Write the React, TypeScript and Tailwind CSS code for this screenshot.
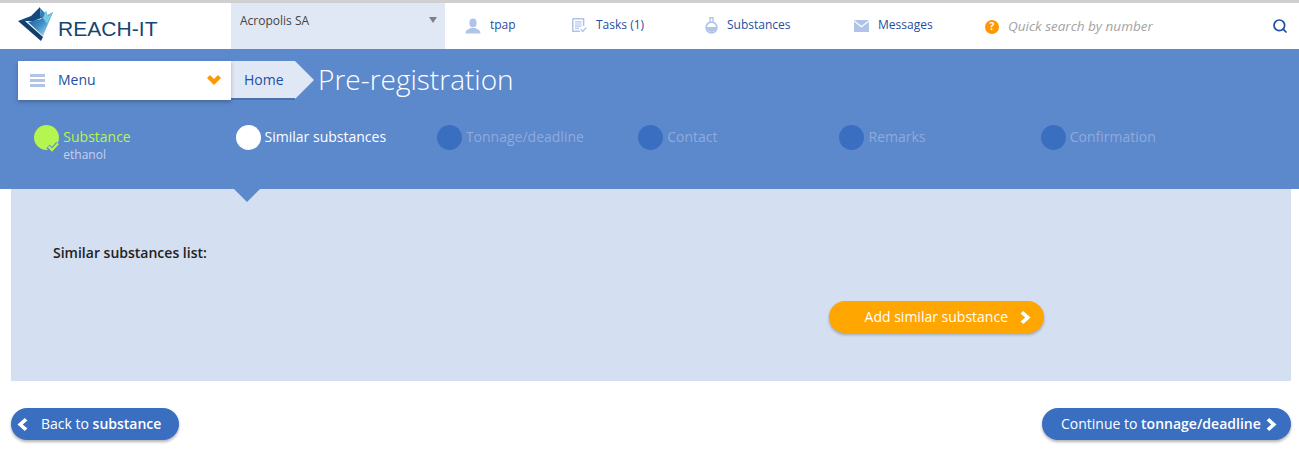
// App.tsx
// Pre-registration wizard page, step "Similar substances".
import { Search } from "lucide-react";

const STEPS = [
  { label: "Substance", sub: "ethanol", state: "done" },
  { label: "Similar substances", state: "current" },
  { label: "Tonnage/deadline", state: "todo" },
  { label: "Contact", state: "todo" },
  { label: "Remarks", state: "todo" },
  { label: "Confirmation", state: "todo" },
];

function Logo() {
  return (
    <div className="flex items-center">
      <svg width="36" height="35" viewBox="0 0 36 35" className="shrink-0">
        <defs>
          <linearGradient id="logoBody" x1="0.1" y1="0.1" x2="0.8" y2="0.8">
            <stop offset="0" stopColor="#16568f" />
            <stop offset="0.6" stopColor="#3f8fc8" />
            <stop offset="1" stopColor="#8cc8ea" />
          </linearGradient>
        </defs>
        <path d="M0 14 L13 9 L22 0 L23 11 L16 14 L8 14 Z" fill="#14497f" />
        <path d="M0 14 L23 34 L25 30 L7 14 Z" fill="#123d6e" />
        <path d="M10 15 L23 12 L35 5 L25 29 Z" fill="url(#logoBody)" />
        <path d="M22 1 L29 8 L23 12 Z" fill="#2f7fba" />
        <path d="M28 3 L30 9 L35 5 L29 17 L25 11 Z" fill="#74cbe4" />
      </svg>
      <span className="ml-[4px] mt-[7px] font-['Liberation_Sans',sans-serif] text-[21px] leading-none tracking-[0.05px] text-[#154573]">
        REACH-IT
      </span>
    </div>
  );
}

function UserIcon() {
  return (
    <svg width="16" height="16" viewBox="0 0 16 16" fill="#b0c4e8">
      <ellipse cx="8" cy="5" rx="3.6" ry="4.4" />
      <path d="M0.5 15.5 C0.5 11.5 4 11 6 10 L10 10 C12 11 15.5 11.5 15.5 15.5 Z" />
    </svg>
  );
}

function TasksIcon() {
  return (
    <svg width="15" height="15" viewBox="0 0 15 15" fill="none">
      <path d="M0.8 0.8 H11.6 V8 M8 13.2 H0.8 V0.8" stroke="#b0c4e8" strokeWidth="1.5" />
      <path d="M3 3.8 H9.5 M3 6 H9.5 M3 8.2 H9.5 M3 10.4 H7" stroke="#b0c4e8" strokeWidth="1.2" />
      <path d="M8.8 11.5 L10.8 13.5 L14.2 9.5" stroke="#b0c4e8" strokeWidth="1.3" />
    </svg>
  );
}

function FlaskIcon() {
  return (
    <svg width="13" height="17" viewBox="0 0 13 17" fill="none">
      <path d="M5 0.5 V6 M8 0.5 V6" stroke="#b0c4e8" strokeWidth="1.3" />
      <rect x="4.5" y="0" width="4" height="1.5" fill="#b0c4e8" />
      <circle cx="6.5" cy="10.5" r="5.4" stroke="#b0c4e8" strokeWidth="1.6" fill="#fff" />
      <path d="M1.5 10 H11.5 A5 5 0 0 1 1.5 10 Z" fill="#b0c4e8" />
    </svg>
  );
}

function MailIcon() {
  return (
    <svg width="15" height="12" viewBox="0 0 15 12">
      <path d="M0 0 H15 L7.5 6 Z" fill="#b0c4e8" />
      <path d="M0 1.6 L7.5 7.6 L15 1.6 V12 H0 Z" fill="#b0c4e8" />
    </svg>
  );
}

function ChevronRightBold({ className }: { className?: string }) {
  return (
    <svg width="11" height="13" viewBox="0 0 11 13" className={className} fill="currentColor">
      <path d="M3.2 0 L10.5 6.5 L3.2 13 L0.6 10.6 L5.2 6.5 L0.6 2.4 Z" />
    </svg>
  );
}

function ChevronLeftBold({ className }: { className?: string }) {
  return (
    <svg width="11" height="13" viewBox="0 0 11 13" className={className} fill="currentColor">
      <path d="M7.8 0 L0.5 6.5 L7.8 13 L10.4 10.6 L5.8 6.5 L10.4 2.4 Z" />
    </svg>
  );
}

function NavItem({
  icon,
  label,
  iconWidth,
  className,
}: {
  icon: React.ReactNode;
  label: string;
  iconWidth: string;
  className: string;
}) {
  return (
    <div className={`flex items-center ${className}`}>
      <div className={`flex shrink-0 justify-start ${iconWidth}`}>{icon}</div>
      <span className="pb-[2px] text-xs text-[#1f4ea3]">{label}</span>
    </div>
  );
}

function StepDot({ state }: { state: string }) {
  const color =
    state === "done" ? "bg-[#b5f54f]" : state === "current" ? "bg-white" : "bg-[#3a6ec0]";
  return (
    <div className={`relative size-[25px] shrink-0 rounded-full ${color}`}>
      {state === "done" && (
        <svg width="14" height="12" viewBox="0 0 14 12" className="absolute -bottom-[3px] -right-[1px]" fill="none">
          <path d="M2 5.5 L6 9.5 L12 2.5" stroke="#5c88cc" strokeWidth="4.6" />
          <path d="M2.5 5.5 L6 9 L12 2.5" stroke="#b5f54f" strokeWidth="2.4" />
        </svg>
      )}
    </div>
  );
}

export default function App() {
  return (
    <div className="h-[458px] overflow-hidden bg-white font-['Open_Sans',sans-serif]">
      <div className="h-[3px] bg-[#cfcfcf]" />

      {/* top bar */}
      <header className="flex h-[46px] items-stretch">
        <div className="flex w-[231px] shrink-0 items-center pb-[3px] pl-[18px]">
          <Logo />
        </div>
        <div className="flex w-[214px] shrink-0 items-start justify-between bg-[#e1e8f5] pl-[9px] pr-2 pt-[10px]">
          <span className="text-xs text-[#444]">Acropolis SA</span>
          <span className="mt-1 h-0 w-0 border-x-[4px] border-t-[6px] border-x-transparent border-t-[#808080]" />
        </div>
        <div className="flex items-center pb-[1px]">
          <NavItem icon={<UserIcon />} label="tpap" iconWidth="w-[25px]" className="ml-[20px] w-[107px]" />
          <NavItem icon={<TasksIcon />} label="Tasks (1)" iconWidth="w-[24px]" className="w-[133px]" />
          <NavItem icon={<FlaskIcon />} label="Substances" iconWidth="w-[22px]" className="w-[149px]" />
          <NavItem icon={<MailIcon />} label="Messages" iconWidth="w-[24px]" className="w-[131px]" />
          <div className="mt-[2px] flex size-[14px] shrink-0 items-center justify-center rounded-full bg-[#ff9800] text-[10px] font-bold text-white">
            ?
          </div>
          <span className="ml-[9px] mt-[2px] text-[13.5px] italic text-[#a3a3a3]">Quick search by number</span>
        </div>
        <div className="ml-auto flex items-center pb-[1px] pr-[11px]">
          <Search size={16} strokeWidth={2.6} className="text-[#1f4ea3]" />
        </div>
      </header>

      {/* blue band */}
      <section className="relative h-[140px] bg-[#5c88cc] pl-[18px] pt-[12px]">
        <div className="flex h-[39px] items-stretch">
          <div className="relative z-10 flex w-[213px] items-center bg-white pl-[12px] pr-[10px] shadow-[0_2px_4px_rgba(0,0,0,0.25)]">
            <div className="flex w-[15px] flex-col gap-[2px]">
              <div className="h-[3px] bg-[#b0c4e8]" />
              <div className="h-[3px] bg-[#b0c4e8]" />
              <div className="h-[3px] bg-[#b0c4e8]" />
            </div>
            <span className="ml-[13px] pb-[2px] text-sm text-[#1f4ea3]">Menu</span>
            <svg width="14" height="10" viewBox="0 0 14 10" className="ml-auto mb-[1px] text-[#ff9800]" fill="currentColor">
              <path d="M0 3 L3 0 L7 4 L11 0 L14 3 L7 10 Z" />
            </svg>
          </div>
          <div className="relative flex w-[64px] items-center border-b-2 border-[#4a70ad] bg-[#e1e8f5] pl-[13px]">
            <span className="pt-[1px] text-sm text-[#1f4ea3]">Home</span>
            <div className="absolute left-full top-0 h-0 w-0 border-y-[19px] border-l-[19px] border-y-transparent border-l-[#e1e8f5]" />
          </div>
          <h1 className="ml-[23px] pb-[2px] text-[28px] font-light leading-[37px] text-white">Pre-registration</h1>
        </div>

        <div className="mt-[25px] flex pl-[16.3px]">
          {STEPS.map((step) => (
            <div key={step.label} className="flex w-[201.3px] shrink-0 items-start gap-[4px]">
              <StepDot state={step.state} />
              <div className="flex flex-col">
                <span
                  className={`text-sm leading-[24px] ${
                    step.state === "done"
                      ? "text-[#b5f54f]"
                      : step.state === "current"
                        ? "text-white"
                        : "text-[#8fabdc]"
                  }`}
                >
                  {step.label}
                </span>
                {step.sub && <span className="text-xs leading-[12px] text-[#c3d3ee]">{step.sub}</span>}
              </div>
            </div>
          ))}
        </div>

        <div className="absolute left-[234px] top-full z-10 h-0 w-0 border-x-[13px] border-t-[13px] border-x-transparent border-t-[#5c88cc]" />
      </section>

      {/* content panel */}
      <main className="relative ml-[11px] mr-[8px] h-[192px] bg-[#d4dff1] pl-[42px] pt-[54px]">
        <div className="text-sm font-semibold leading-5 text-[#222]">Similar substances list:</div>
        <div className="ml-[776px] mt-[38px] flex h-[32px] w-[215px] items-center justify-end rounded-[16px] bg-[#ffa600] pr-[13px] text-white shadow-[0_2px_3px_rgba(0,0,0,0.25)]">
          <span className="text-sm">Add similar substance</span>
          <ChevronRightBold className="ml-[12px] mt-[1px]" />
        </div>
      </main>

      {/* wizard buttons */}
      <div className="ml-[11px] mr-[8px] mt-[27px] flex justify-between">
        <div className="flex h-[32px] w-[168px] items-center rounded-[16px] bg-[#396ec0] pl-[6px] text-sm text-white shadow-[0_2px_3px_rgba(0,0,0,0.3)]">
          <ChevronLeftBold className="mt-[1px]" />
          <span className="ml-[13px]">
            Back to <b className="font-semibold">substance</b>
          </span>
        </div>
        <div className="flex h-[32px] w-[249px] items-center rounded-[16px] bg-[#396ec0] pl-[19px] text-sm text-white shadow-[0_2px_3px_rgba(0,0,0,0.3)]">
          <span>
            Continue to <b className="font-semibold">tonnage/deadline</b>
          </span>
          <ChevronRightBold className="ml-[5px] mt-[1px]" />
        </div>
      </div>
    </div>
  );
}
